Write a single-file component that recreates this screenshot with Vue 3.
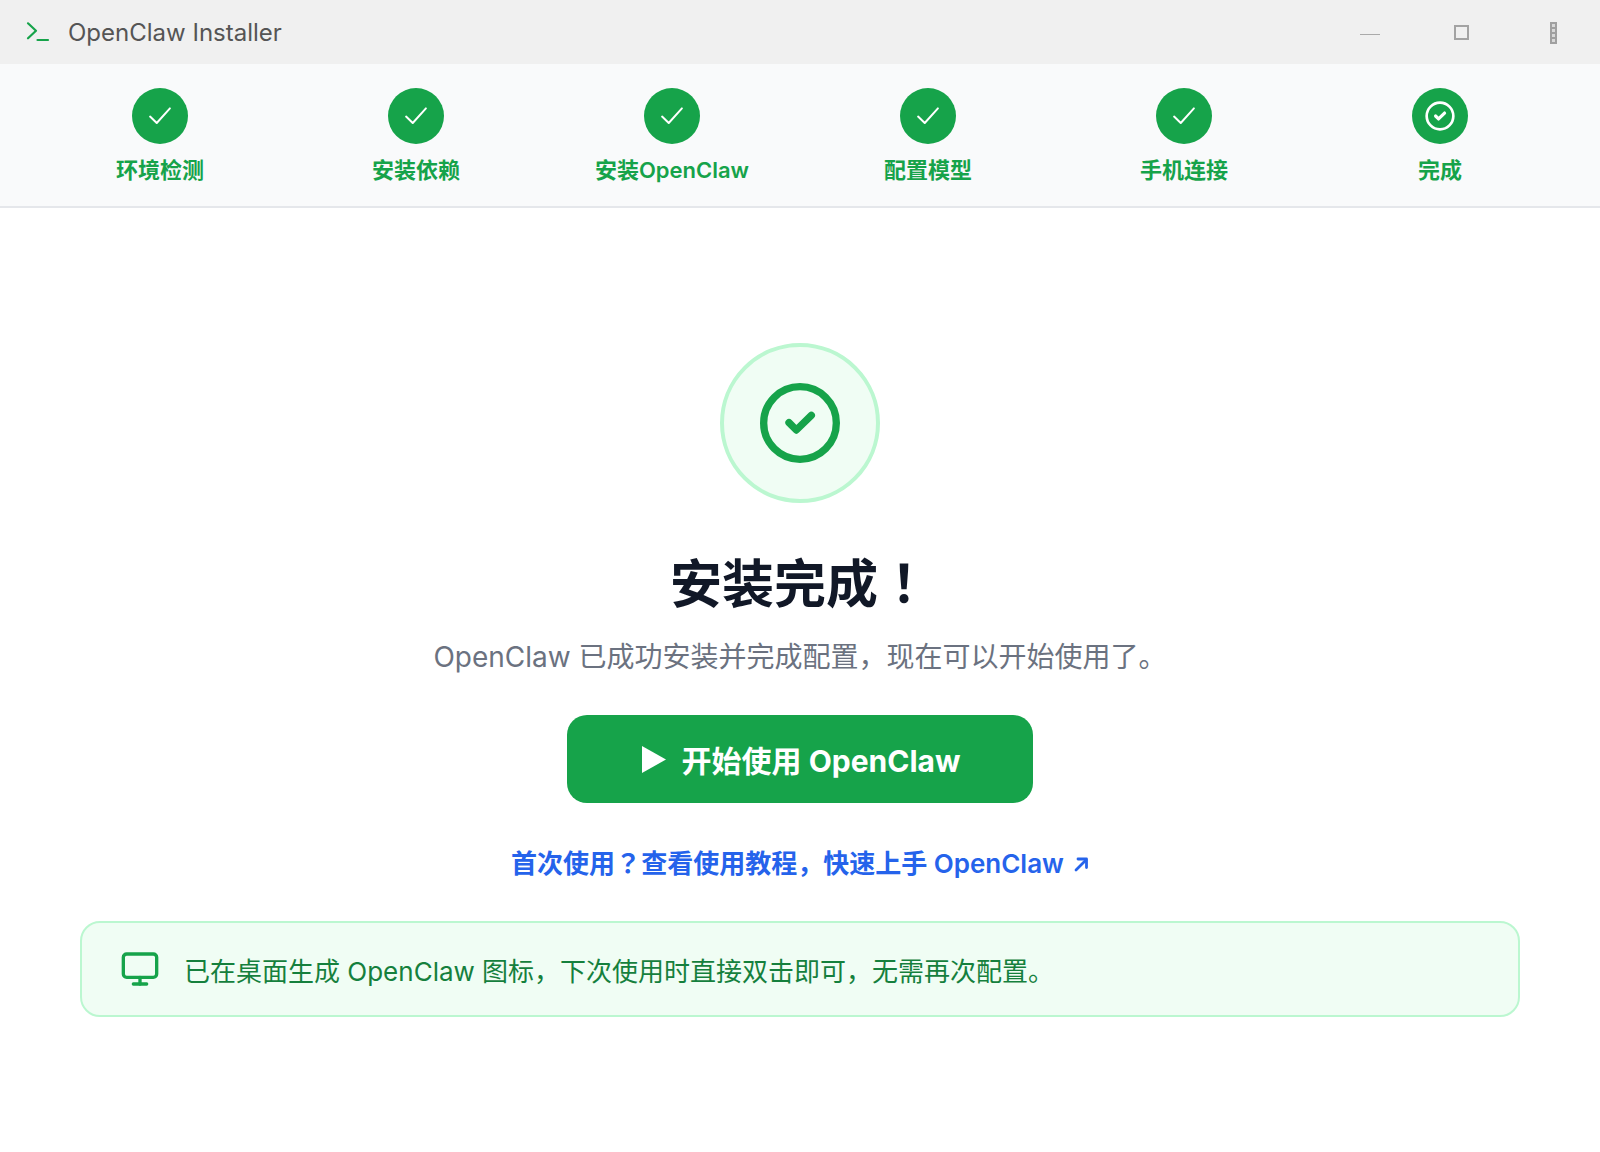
<script setup>
const steps = ['环境检测','安装依赖','安装OpenClaw','配置模型','手机连接','完成']
</script>
<template>
<div class="app">
  <header class="titlebar">
    <svg class="logo" viewBox="0 0 24 24" fill="none" stroke="#16a34a" stroke-width="2.2" stroke-linecap="round" stroke-linejoin="round"><path d="M2 3.3l8 7.4-8 7.6"/><path d="M11.5 20H22"/></svg>
    <span class="title">OpenClaw Installer</span>
    <div class="winbtns">
      <span class="winbtn"><i class="min"></i></span>
      <span class="winbtn"><i class="max"></i></span>
      <span class="winbtn"><i class="close"></i></span>
    </div>
  </header>
  <nav class="steps">
    <div v-for="(s,i) in steps" :key="s" class="step">
      <span class="dot">
        <svg v-if="i<5" class="tick" viewBox="0 0 24 24" fill="none" stroke="#fff" stroke-width="1.7" stroke-linecap="round" stroke-linejoin="round"><path d="M3.5 12.5l5.7 5.5L20.5 5.5"/></svg>
        <svg v-else class="ring" viewBox="0 0 24 24" fill="none" stroke="#fff" stroke-linecap="round" stroke-linejoin="round"><circle cx="12" cy="12" r="10" stroke-width="2"/><path d="M8.7 12l2.2 2.2 4.5-4.4" stroke-width="2.4"/></svg>
      </span>
      <span class="label">{{ s }}</span>
    </div>
  </nav>
  <main class="main">
    <div class="hero">
      <svg viewBox="0 0 24 24" fill="none" stroke="#16a34a" stroke-linecap="round" stroke-linejoin="round"><circle cx="12" cy="12" r="10.9" stroke-width="2.2"/><path d="M8.7 11.9l2.2 2.2 4.5-4.4" stroke-width="2.2"/></svg>
    </div>
    <h1>安装完成<span class="tc" lang="zh-TW">！</span></h1>
    <p class="sub">OpenClaw 已成功安装并完成配置，现在可以开始使用了。</p>
    <button class="cta">
      <svg viewBox="0 0 24 27" fill="#fff"><path d="M0 0l24 13.5L0 27z"/></svg>
      <span>开始使用 OpenClaw</span>
    </button>
    <a class="link">
      <span>首次使用<span class="tc" lang="zh-TW">？</span>查看使用教程，快速上手 OpenClaw</span>
      <svg viewBox="0 0 16 16" fill="none" stroke="#2563eb" stroke-width="2.8" stroke-linecap="round" stroke-linejoin="round"><path d="M3 14L13 4"/><path d="M5 3h8.5v8.5"/></svg>
    </a>
    <div class="notice">
      <svg viewBox="0 0 24 24" fill="none" stroke="#16a34a" stroke-width="2" stroke-linecap="round" stroke-linejoin="round"><rect x="2" y="3" width="20" height="14" rx="2"/><path d="M8 21h8"/><path d="M12 17v4"/></svg>
      <span>已在桌面生成 OpenClaw 图标，下次使用时直接双击即可，无需再次配置。</span>
    </div>
  </main>
</div>
</template>
<style scoped>
.app{width:1600px;height:1152px;background:#fff;font-family:Inter,"Noto Sans CJK SC",sans-serif;display:flex;flex-direction:column;overflow:hidden}
.titlebar{height:64px;background:#f0f0f0;display:flex;align-items:center;padding-left:26px;flex:none}
.logo{width:24px;height:24px}
.title{margin-left:18px;font-size:24px;color:#555}
.winbtns{margin-left:auto;display:flex}
.winbtn{width:92px;height:64px;display:flex;align-items:center;justify-content:center}
.min{width:20px;height:1px;background:#aaa;margin-top:5px}
.max{width:15px;height:15px;border:2px solid #a3a3a3;box-sizing:border-box;margin-right:2px;margin-top:1px}
.close{width:7px;height:22px;box-sizing:border-box;border:2px solid #a0a0a0;background:repeating-linear-gradient(#d8d8d8 0 3px,#a0a0a0 3px 5px);margin:2px 1px 0 0}
.steps{height:142px;background:#f9fafb;border-bottom:2px solid #e5e7eb;display:grid;grid-template-columns:repeat(6,256px);padding:0 32px;flex:none}
.step{display:flex;flex-direction:column;align-items:center;padding-top:24px}
.dot{width:56px;height:56px;border-radius:50%;background:#16a34a;display:flex;align-items:center;justify-content:center}
.tick{width:28px;height:28px}
.ring{width:32px;height:32px}
.label{margin-top:10px;font-size:22px;font-weight:600;color:#16a34a;line-height:32px}
.main{flex:1;display:flex;flex-direction:column;align-items:center;padding:135px 80px 0}
.hero{width:160px;height:160px;box-sizing:border-box;border-radius:50%;background:#f0fdf4;border:4px solid #bbf7d0;display:flex;align-items:center;justify-content:center}
.hero svg{width:80px;height:80px}
h1{margin:48px 0 0;font-size:52px;line-height:68px;font-weight:700;color:#111827}
.tc{font-family:Inter,"Noto Sans CJK TC",sans-serif}
.sub{margin:16px 0 0;font-size:28px;line-height:44px;color:#6b7280}
.cta{margin-top:36px;width:466px;height:88px;border:none;border-radius:20px;background:#16a34a;color:#fff;font:650 30px Inter,"Noto Sans CJK SC",sans-serif;display:flex;align-items:center;justify-content:center;gap:16px;padding:0 0 0 2px}
.cta svg{width:24px;height:27px;flex:none}
.link{margin-top:41px;font-size:26px;line-height:40px;font-weight:600;color:#2563eb;display:flex;align-items:center;gap:9px}
.link svg{width:16px;height:16px}
.notice{margin-top:37px;width:1440px;height:96px;box-sizing:border-box;border:2px solid #bbf7d0;border-radius:20px;background:#f0fdf4;display:flex;align-items:center;padding-left:38px;gap:24px;color:#15803d;font-size:26px}
.notice svg{width:40px;height:40px}
</style>
